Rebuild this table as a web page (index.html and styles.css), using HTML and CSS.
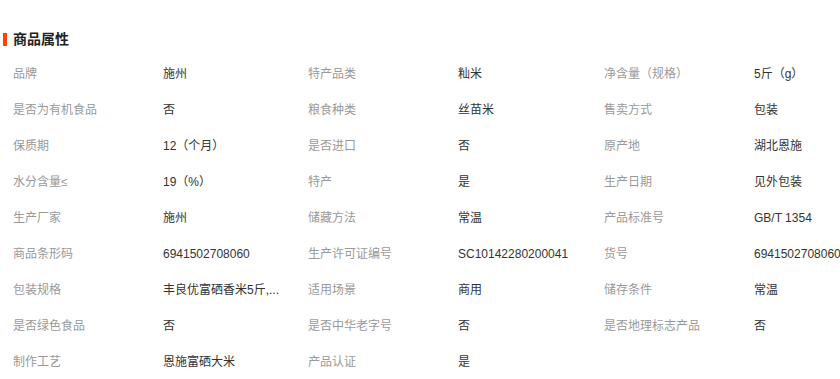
FILE: index.html
```html
<!DOCTYPE html>
<html lang="zh">
<head>
<meta charset="utf-8">
<link rel="stylesheet" href="styles.css">
</head>
<body>
<div class="page">
  <div class="title"><span class="bar"></span><span class="title-text">商品属性</span></div>
  <div class="grid">
    <div class="k">品牌</div><div class="v">施州</div><div class="k">特产品类</div><div class="v">籼米</div><div class="k">净含量（规格）</div><div class="v">5斤（g）</div>
    <div class="k">是否为有机食品</div><div class="v">否</div><div class="k">粮食种类</div><div class="v">丝苗米</div><div class="k">售卖方式</div><div class="v">包装</div>
    <div class="k">保质期</div><div class="v">12（个月）</div><div class="k">是否进口</div><div class="v">否</div><div class="k">原产地</div><div class="v">湖北恩施</div>
    <div class="k">水分含量≤</div><div class="v">19（%）</div><div class="k">特产</div><div class="v">是</div><div class="k">生产日期</div><div class="v">见外包装</div>
    <div class="k">生产厂家</div><div class="v">施州</div><div class="k">储藏方法</div><div class="v">常温</div><div class="k">产品标准号</div><div class="v">GB/T 1354</div>
    <div class="k">商品条形码</div><div class="v">6941502708060</div><div class="k">生产许可证编号</div><div class="v">SC10142280200041</div><div class="k">货号</div><div class="v">6941502708060</div>
    <div class="k">包装规格</div><div class="v">丰良优富硒香米5斤,...</div><div class="k">适用场景</div><div class="v">商用</div><div class="k">储存条件</div><div class="v">常温</div>
    <div class="k">是否绿色食品</div><div class="v">否</div><div class="k">是否中华老字号</div><div class="v">否</div><div class="k">是否地理标志产品</div><div class="v">否</div>
    <div class="k">制作工艺</div><div class="v">恩施富硒大米</div><div class="k">产品认证</div><div class="v">是</div><div class="k"></div><div class="v"></div>
  </div>
</div>
</body>
</html>
```
FILE: styles.css
```css
html, body {
  margin: 0;
  padding: 0;
  background: #fff;
}
body {
  font-family: "Liberation Sans", "Noto Sans CJK SC", sans-serif;
  font-size: 12px;
  color: #333;
  overflow: hidden;
}
.page {
  width: 840px;
}
.title {
  display: flex;
  align-items: center;
  gap: 6px;
  padding-left: 3px;
  margin-top: 30px;
  height: 18px;
  line-height: 18px;
}
.bar {
  width: 4px;
  height: 13px;
  background: #ff4400;
}
.title-text {
  font-size: 14px;
  font-weight: bold;
  color: #222;
}
.grid {
  display: grid;
  grid-template-columns: 150px 145px 150px 146px 150px 86px;
  grid-auto-rows: 36px;
  padding-left: 13px;
  margin-top: 8px;
  line-height: 36px;
}
.k {
  color: #999;
  white-space: nowrap;
}
.v {
  color: #333;
  white-space: nowrap;
}
```
